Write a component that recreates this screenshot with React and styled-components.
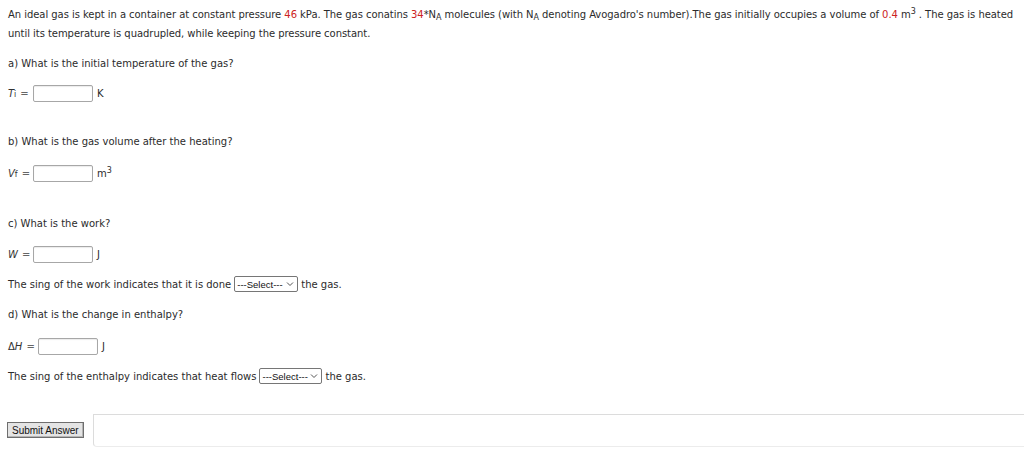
import React from 'react';
import styled, { createGlobalStyle } from 'styled-components';

const GlobalStyle = createGlobalStyle`
    html, body {
        margin: 0;
        padding: 0;
        background: #ffffff;
    }
    body {
        font-family: "DejaVu Sans", Verdana, sans-serif;
        font-size: 10px;
        color: #2b2b2b;
    }
`

const Page = styled.div`
    padding: 5px 4px 0 8px;
    width: 1024px;
    box-sizing: border-box;
    height: 456px;
    overflow: hidden;
`

const Intro = styled.p`
    margin: 0;
    line-height: 19px;
    letter-spacing: -0.05px;
`

const Red = styled.span`
    color: #cc2222;
`

const Sub = styled.sub`
    font-size: 8px;
    vertical-align: -2px;
    line-height: 0;
`

const Sup = styled.sup`
    font-size: 8px;
    vertical-align: 4px;
    line-height: 0;
`

const Line = styled.div`
    margin-top: ${p => p.$top || 11}px;
    line-height: 19px;
    white-space: nowrap;
`

const AnswerRow = styled.div`
    margin-top: ${p => p.$top || 11}px;
    height: 20px;
    display: flex;
    align-items: center;
    gap: 3px;
`

const Label = styled.span`
    display: inline-flex;
    align-items: baseline;
    width: ${p => p.$w || 22}px;
    font-size: 10px;
    color: #333;
`

const Var = styled.i`
    font-style: italic;
`

const Eq = styled.span`
    margin-left: 4px;
    color: #666;
`

const NumberInput = styled.input`
    box-sizing: border-box;
    width: 60px;
    height: 17px;
    border: 1px solid #a7a7a7;
    border-radius: 2px;
    box-shadow: inset 0 1px 1px rgba(0, 0, 0, 0.08);
    padding: 0 3px;
    font-family: inherit;
    font-size: 10px;
    outline: none;
`

const Unit = styled.span`
    margin-left: 1px;
    font-size: 10px;
`

const SelectBox = styled.span`
    display: inline-flex;
    align-items: center;
    justify-content: space-between;
    box-sizing: border-box;
    width: ${p => p.$w || 64}px;
    height: 16px;
    padding: 0 3px 0 2px;
    margin: 0 3px 0 3px;
    border: 1px solid #767676;
    border-radius: 2px;
    font-family: "Liberation Sans", Arial, sans-serif;
    font-size: 9.5px;
    color: #111;
    vertical-align: middle;
    background: #fff;
    position: relative;
    top: -1px;
`

const Footer = styled.div`
    margin-top: 28px;
    display: flex;
    align-items: flex-start;
    margin-left: -1px;
`

const SubmitButton = styled.button`
    margin-top: 8px;
    height: 16px;
    padding: 0 4px;
    font-family: "Liberation Sans", Arial, sans-serif;
    font-size: 10px;
    color: #111;
    background: #e4e4e4;
    border: 1px solid #6e6e6e;
    border-radius: 0;
    box-shadow: inset -1px -1px 0 #b5b5b5;
`

const Panel = styled.div`
    margin-left: 9px;
    flex: 1;
    height: 31px;
    border-top: 1px solid #dcdcdc;
    border-left: 1px solid #dcdcdc;
    border-bottom: 1px solid #ececec;
    border-radius: 0 0 0 4px;
    margin-right: -10px;
`

function Chevron() {
    return (
        <svg width="8" height="6" viewBox="0 0 8 6">
            <path d="M1 1.5 L4 4.5 L7 1.5" fill="none" stroke="#555" strokeWidth="1" />
        </svg>
    );
}

function App() {
    return (
        <>
            <GlobalStyle />
            <Page>
                <Intro>
                    An ideal gas is kept in a container at constant pressure <Red>46</Red> kPa. The gas conatins <Red>34</Red>*N<Sub>A</Sub> molecules (with N<Sub>A</Sub> denoting Avogadro's number).The gas initially occupies a volume of <Red>0.4</Red> m<Sup>3</Sup> . The gas is heated until its temperature is quadrupled, while keeping the pressure constant.
                </Intro>

                <Line $top={11}>a) What is the initial temperature of the gas?</Line>
                <AnswerRow $top={10}>
                    <Label><Var>T</Var><Sub>i</Sub><Eq>=</Eq></Label>
                    <NumberInput type="text" />
                    <Unit>K</Unit>
                </AnswerRow>

                <Line $top={29}>b) What is the gas volume after the heating?</Line>
                <AnswerRow $top={12}>
                    <Label><Var>V</Var><Sub>f</Sub><Eq>=</Eq></Label>
                    <NumberInput type="text" />
                    <Unit>m<Sup>3</Sup></Unit>
                </AnswerRow>

                <Line $top={31}>c) What is the work?</Line>
                <AnswerRow $top={11}>
                    <Label><Var>W</Var><Eq>=</Eq></Label>
                    <NumberInput type="text" />
                    <Unit>J</Unit>
                </AnswerRow>

                <Line $top={11}>
                    The sing of the work indicates that it is done
                    <SelectBox $w={64}>---Select---<Chevron /></SelectBox>
                    the gas.
                </Line>

                <Line $top={11}>d) What is the change in enthalpy?</Line>
                <AnswerRow $top={12}>
                    <Label $w={27}>&Delta;<Var>H</Var><Eq>=</Eq></Label>
                    <NumberInput type="text" />
                    <Unit>J</Unit>
                </AnswerRow>

                <Line $top={11}>
                    The sing of the enthalpy indicates that heat flows
                    <SelectBox $w={63}>---Select---<Chevron /></SelectBox>
                    the gas.
                </Line>

                <Footer>
                    <SubmitButton type="button">Submit Answer</SubmitButton>
                    <Panel />
                </Footer>
            </Page>
        </>
    );
}

export default App;
